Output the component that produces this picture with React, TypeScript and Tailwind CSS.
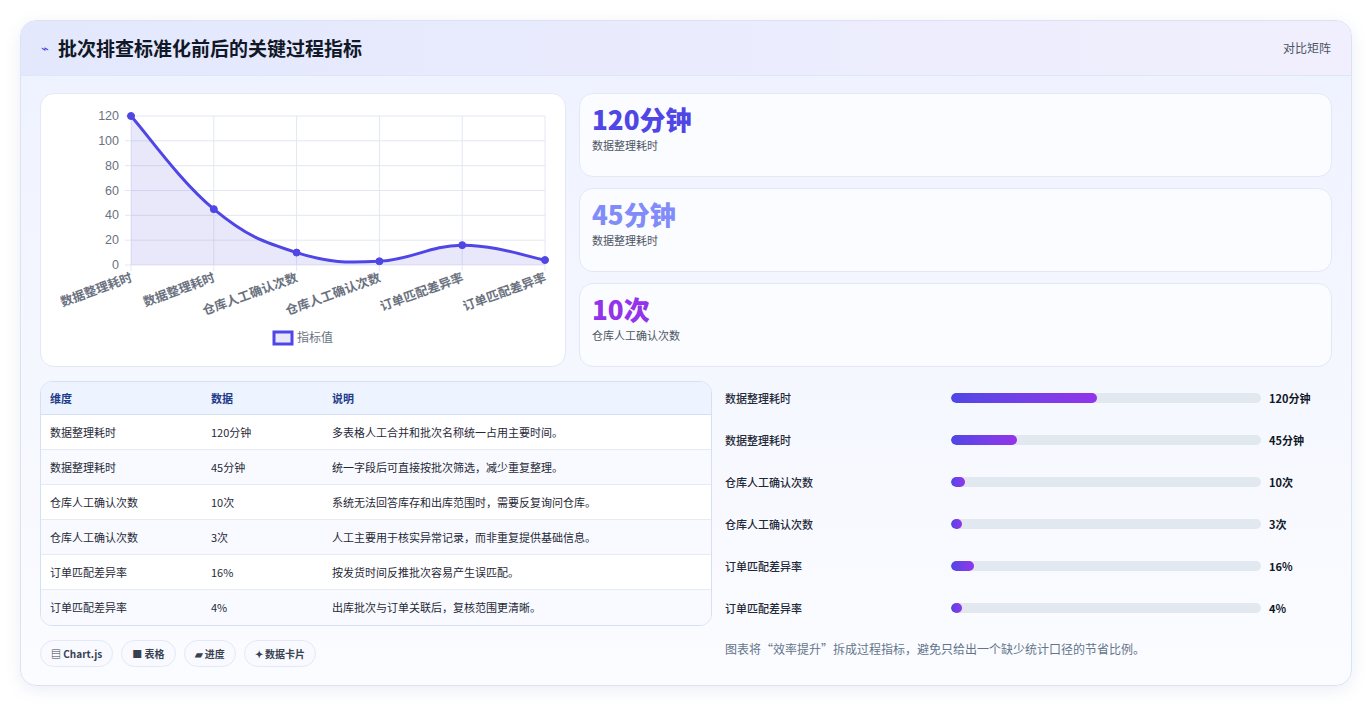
import React from "react";

const vals = [120, 45, 10, 3, 16, 4];
const labels = ["数据整理耗时", "数据整理耗时", "仓库人工确认次数", "仓库人工确认次数", "订单匹配差异率", "订单匹配差异率"];
const X0 = 90, X1 = 504, Y0 = 171, Y1 = 22;
const xs = vals.map((_, i) => X0 + ((X1 - X0) / 5) * i);
const ys = vals.map((v) => Y0 - ((Y0 - Y1) * v) / 120);

function curve() {
  let d = `M${xs[0]},${ys[0]}`;
  const t = 0.4;
  for (let i = 0; i < 5; i++) {
    const p0x = xs[Math.max(i - 1, 0)], p0y = ys[Math.max(i - 1, 0)];
    const p3x = xs[Math.min(i + 2, 5)], p3y = ys[Math.min(i + 2, 5)];
    const c1x = xs[i] + ((xs[i + 1] - p0x) * t) / 2;
    const c1y = ys[i] + ((ys[i + 1] - p0y) * t) / 2;
    const c2x = xs[i + 1] - ((p3x - xs[i]) * t) / 2;
    const c2y = Math.min(Y0, ys[i + 1] - ((p3y - ys[i]) * t) / 2);
    d += ` C${c1x},${c1y} ${c2x},${c2y} ${xs[i + 1]},${ys[i + 1]}`;
  }
  return d;
}

function Chart() {
  const d = curve();
  return (
    <svg width="525" height="273" className="block" style={{ fontFamily: "'Liberation Sans','Noto Sans CJK SC',sans-serif" }}>
      {[0, 20, 40, 60, 80, 100, 120].map((v) => {
        const y = Y0 - ((Y0 - Y1) * v) / 120;
        return (
          <g key={v}>
            <line x1={X0 - 6} x2={X1} y1={y} y2={y} stroke="#e2e8f0" />
            <text x={78} y={y + 4} textAnchor="end" fontSize="12.5" fill="#6b7280">{v}</text>
          </g>
        );
      })}
      {xs.map((x, i) => (
        <line key={i} x1={x} x2={x} y1={Y1} y2={Y0 + 6} stroke="#e2e8f0" />
      ))}
      <path d={`${d} L${X1},${Y0} L${X0},${Y0} Z`} fill="rgba(99,91,230,0.14)" />
      <path d={d} fill="none" stroke="#4f46e5" strokeWidth="3" />
      {xs.map((x, i) => (
        <circle key={i} cx={x} cy={ys[i]} r="3.5" fill="#4f46e5" stroke="#4f46e5" />
      ))}
      {xs.map((x, i) => (
        <text key={i} transform={`translate(${x + 2},${Y0 + 16}) rotate(-20)`} textAnchor="end" fontSize="12.5" fontWeight="600" fill="#6b7280" style={{ fontFamily: "'Noto Sans CJK SC',sans-serif" }}>{labels[i]}</text>
      ))}
      <rect x="233" y="238" width="18" height="12" fill="rgba(99,91,230,0.14)" stroke="#4f46e5" strokeWidth="3" />
      <text x="256" y="248" fontSize="12" fill="#6b7280" style={{ fontFamily: "'Noto Sans CJK SC',sans-serif" }}>指标值</text>
    </svg>
  );
}

const stats = [
  { v: "120分钟", l: "数据整理耗时", c: "text-[#4f46e5]" },
  { v: "45分钟", l: "数据整理耗时", c: "text-[#818cf8]" },
  { v: "10次", l: "仓库人工确认次数", c: "text-[#9333ea]" },
];

const rows = [
  ["数据整理耗时", "120分钟", "多表格人工合并和批次名称统一占用主要时间。"],
  ["数据整理耗时", "45分钟", "统一字段后可直接按批次筛选，减少重复整理。"],
  ["仓库人工确认次数", "10次", "系统无法回答库存和出库范围时，需要反复询问仓库。"],
  ["仓库人工确认次数", "3次", "人工主要用于核实异常记录，而非重复提供基础信息。"],
  ["订单匹配差异率", "16%", "按发货时间反推批次容易产生误匹配。"],
  ["订单匹配差异率", "4%", "出库批次与订单关联后，复核范围更清晰。"],
];
const fills = [146, 66, 14, 11, 23, 11];

export default function App() {
  return (
    <div className="w-[1372px] h-[706px] bg-white p-[20px] pb-[20px]" style={{ fontFamily: "'Noto Sans CJK SC','Noto Sans',sans-serif" }}>
      <div className="h-[666px] rounded-[16px] border border-[#dbe3f3] bg-gradient-to-b from-[#eef2ff] to-[#fbfcff] shadow-[0_4px_16px_rgba(100,116,180,0.12)] overflow-hidden flex flex-col">
        <div className="h-[55px] shrink-0 flex items-center justify-between px-[20px] bg-gradient-to-r from-[#e3e8fd] to-[#f1effd] border-b border-[#dfe6f6]">
          <div className="flex items-center gap-[9px]">
            <span className="text-[#4f46e5] text-[13px]">⌁</span>
            <span className="text-[19px] font-bold text-[#111827]">批次排查标准化前后的关键过程指标</span>
          </div>
          <span className="text-[12px] text-[#4b5563]">对比矩阵</span>
        </div>
        <div className="flex-1 px-[19px] pt-[17px] flex flex-col">
          <div className="flex gap-[13px] h-[274px]">
            <div className="w-[526px] shrink-0 rounded-[14px] border border-[#e2e8f5] bg-white overflow-hidden">
              <Chart />
            </div>
            <div className="flex-1 flex flex-col gap-[11px]">
              {stats.map((s, i) => (
                <div key={i} className="flex-1 rounded-[14px] border border-[#e2e8f5] bg-[#fbfcff] px-[12px] pt-[9px]">
                  <div className={`text-[26px] font-extrabold leading-[32px] ${s.c}`}>{s.v}</div>
                  <div className="text-[11px] text-[#4b5563] mt-[2px]">{s.l}</div>
                </div>
              ))}
            </div>
          </div>
          <div className="flex gap-[13px] mt-[14px]">
            <div className="w-[672px] shrink-0">
              <div className="rounded-[12px] border border-[#d6e0f0] overflow-hidden bg-white">
                <div className="h-[33px] flex items-center bg-[#eef4ff] border-b border-[#d6e0f0] text-[11px] font-semibold text-[#1e3a8a]">
                  <div className="w-[170px] pl-[9px]">维度</div>
                  <div className="w-[121px]">数据</div>
                  <div>说明</div>
                </div>
                {rows.map((r, i) => (
                  <div key={i} className={`h-[35px] flex items-center text-[11px] text-[#1f2937] ${i < 5 ? "border-b border-[#e5eaf3]" : ""} ${i % 2 ? "bg-[#f8faff]" : "bg-white"}`}>
                    <div className="w-[170px] pl-[9px]">{r[0]}</div>
                    <div className="w-[121px]">{r[1]}</div>
                    <div>{r[2]}</div>
                  </div>
                ))}
              </div>
              <div className="flex gap-[8px] mt-[14px]">
                {["▤ Chart.js", "■ 表格", "▰ 进度", "✦ 数据卡片"].map((t) => (
                  <span key={t} className="h-[27px] px-[10px] rounded-full border border-[#e2e8f5] bg-[#f8faff] text-[10px] font-semibold text-[#374151] flex items-center">{t}</span>
                ))}
              </div>
            </div>
            <div className="flex-1 flex flex-col -mt-[4px]">
              {rows.map((r, i) => (
                <div key={i} className="h-[42px] flex items-center">
                  <div className="w-[226px] text-[11px] font-medium text-[#1f2937]">{r[0]}</div>
                  <div className="w-[310px] h-[10px] rounded-full bg-[#e2e8f0] overflow-hidden">
                    <div className="h-full rounded-full bg-gradient-to-r from-[#4f46e5] to-[#9333ea]" style={{ width: fills[i] }} />
                  </div>
                  <div className="ml-[8px] text-[11px] font-bold text-[#111827]">{r[1]}</div>
                </div>
              ))}
              <div className="mt-[11px] text-[12px] text-[#64748b]">图表将“效率提升”拆成过程指标，避免只给出一个缺少统计口径的节省比例。</div>
            </div>
          </div>
        </div>
      </div>
    </div>
  );
}
